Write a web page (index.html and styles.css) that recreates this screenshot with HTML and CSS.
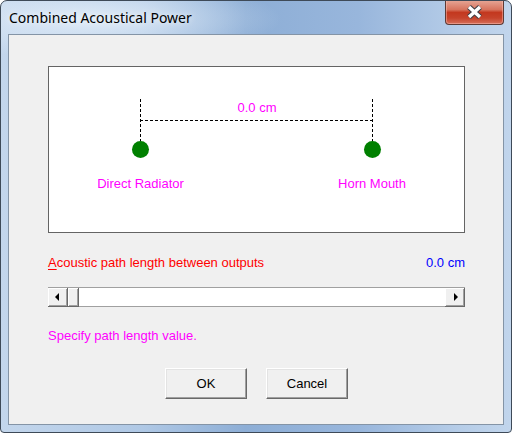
FILE: index.html
```html
<!DOCTYPE html>
<html lang="en">
<head>
    <meta charset="UTF-8">
    <title>Combined Acoustical Power</title>
    <link rel="stylesheet" href="styles.css">
</head>
<body>
    <div class="window">
        <div class="titlebar">
            <span class="title">Combined Acoustical Power</span>
            <button class="close" aria-label="Close">
                <svg width="19" height="14" viewBox="0 0 19 14">
                    <path d="M4 2 L15 12 M15 2 L4 12" stroke="#3f3f46" stroke-width="5.5" fill="none"/>
                    <path d="M4 2 L15 12 M15 2 L4 12" stroke="#ffffff" stroke-width="3.4" fill="none"/>
                </svg>
            </button>
        </div>

        <div class="client">
            <div class="panel">
                <svg class="diagram" width="415" height="165" viewBox="0 0 415 165">
                    <g stroke="#000" stroke-width="1" stroke-dasharray="3 2" shape-rendering="crispEdges">
                        <line x1="91.5" y1="32" x2="91.5" y2="74"/>
                        <line x1="323.5" y1="32" x2="323.5" y2="74"/>
                        <line x1="91" y1="53.5" x2="324" y2="53.5"/>
                    </g>
                    <circle cx="91.5" cy="82.5" r="8.5" fill="#008000"/>
                    <circle cx="323.5" cy="82.5" r="8.5" fill="#008000"/>
                    <text class="tag" x="208" y="45">0.0 cm</text>
                    <text class="tag" x="91.5" y="121">Direct Radiator</text>
                    <text class="tag" x="323" y="121">Horn Mouth</text>
                </svg>
            </div>

            <div class="row">
                <span class="label"><u>A</u>coustic path length between outputs</span>
                <span class="value">0.0 cm</span>
            </div>

            <div class="scrollbar">
                <span class="sb-btn"><i class="arrow-left"></i></span>
                <span class="thumb"></span>
                <span class="track"></span>
                <span class="sb-btn"><i class="arrow-right"></i></span>
            </div>

            <div class="hint">Specify path length value.</div>

            <div class="buttons">
                <button class="btn">OK</button>
                <button class="btn">Cancel</button>
            </div>
        </div>
    </div>
</body>
</html>
```

FILE: styles.css
```css
* {
    box-sizing: border-box;
}

body {
    margin: 0;
    background: #fff;
}

.window {
    width: 512px;
    height: 433px;
    border: 1px solid #3e4a58;
    border-radius: 7px 7px 4px 4px;
    overflow: hidden;
    display: flex;
    flex-direction: column;
    font-family: "Liberation Sans", Arial, sans-serif;
    background:
        radial-gradient(ellipse 190px 40px at 90px 18px, rgba(230, 240, 250, 0.85), rgba(230, 240, 250, 0) 100%),
        linear-gradient(to right, #c3d6ec 0%, #afc8e5 28%, #8daed6 48%, #98b6dc 70%, #b6cde8 90%, #c1d5ec 100%);
}

/* Title bar */
.titlebar {
    height: 33px;
    flex-shrink: 0;
    display: flex;
    justify-content: space-between;
    align-items: flex-start;
    padding: 0 7px 0 8px;
}

.title {
    font-family: "Noto Sans", "Open Sans", sans-serif;
    font-size: 14px;
    line-height: 20px;
    padding-top: 7px;
    color: #000;
    text-shadow: 0 0 6px rgba(255, 255, 255, 0.9);
}

.close {
    margin-top: -1px;
    width: 59px;
    height: 25px;
    padding: 0;
    display: flex;
    align-items: center;
    justify-content: center;
    border: 1px solid #5e3a34;
    border-top: none;
    border-radius: 0 0 4px 4px;
    background: linear-gradient(to bottom, #e7a898 0%, #d7745e 40%, #c3381f 52%, #c6432b 75%, #d6705a 100%);
    box-shadow: inset 0 0 0 1px rgba(255, 200, 190, 0.45);
}

/* Client area */
.client {
    flex: 1;
    margin: 0 7px 7px;
    background: #f0f0f0;
    border: 1px solid #8494a6;
    padding: 31px 38px 0 39px;
    font-size: 13px;
    line-height: 16px;
}

.panel {
    width: 417px;
    height: 167px;
    background: #fff;
    border: 1px solid #646464;
}

.diagram {
    display: block;
}

.tag {
    font-family: "Liberation Sans", Arial, sans-serif;
    font-size: 13px;
    fill: #ff00ff;
    text-anchor: middle;
}

.row {
    margin-top: 22px;
    display: flex;
    justify-content: space-between;
}

.label {
    color: #ff0000;
}

.label u {
    text-decoration-thickness: 1px;
    text-underline-offset: 2px;
}

.value {
    color: #0000ff;
}

/* Scrollbar */
.scrollbar {
    margin-top: 16px;
    height: 20px;
    display: flex;
    border-top: 1px solid #a0a0a0;
    border-bottom: 1px solid #a0a0a0;
    background: #fff;
}

.sb-btn,
.thumb {
    height: 19px;
    background: #f0f0f0;
    border-right: 1px solid #696969;
    border-bottom: 1px solid #696969;
    box-shadow: inset 1px 1px #fff, inset -1px -1px #a0a0a0;
    display: flex;
    align-items: center;
    justify-content: center;
}

.sb-btn {
    width: 20px;
}

.thumb {
    width: 11px;
}

.track {
    flex: 1;
}

.arrow-left,
.arrow-right {
    width: 0;
    height: 0;
    border-top: 4px solid transparent;
    border-bottom: 4px solid transparent;
}

.arrow-left {
    border-right: 4px solid #000;
    margin-right: 2px;
}

.arrow-right {
    border-left: 4px solid #000;
    margin-left: 2px;
}

.hint {
    margin-top: 21px;
    color: #ff00ff;
}

/* Buttons */
.buttons {
    margin-top: 24px;
    display: flex;
    justify-content: center;
    gap: 19px;
}

.btn {
    width: 82px;
    height: 31px;
    padding: 0;
    font-family: "Liberation Sans", Arial, sans-serif;
    font-size: 13px;
    color: #000;
    background: #f0f0f0;
    border: 1px solid;
    border-color: #fff #696969 #696969 #fff;
    box-shadow: inset -1px -1px #a0a0a0, inset 1px 1px #e3e3e3;
}
```
